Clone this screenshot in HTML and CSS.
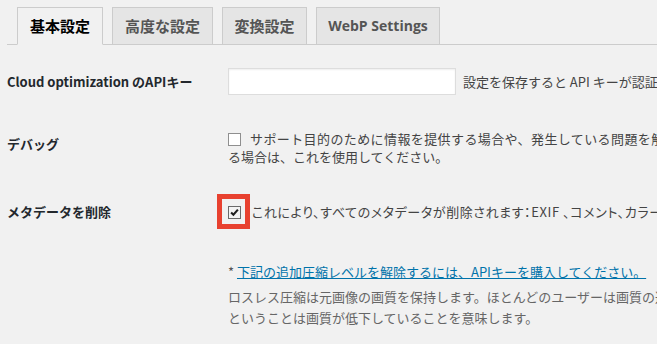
FILE: index.html
```html
<!DOCTYPE html>
<html lang="ja">
<head>
<meta charset="utf-8">
<title>設定</title>
<link rel="stylesheet" href="styles.css">
</head>
<body>
<div class="wrap">
  <nav class="tabs">
    <a class="tab active">基本設定</a>
    <a class="tab">高度な設定</a>
    <a class="tab">変換設定</a>
    <a class="tab latin">WebP Settings</a>
  </nav>

  <div class="row row-api">
    <div class="label">Cloud optimization のAPIキー</div>
    <div class="field">
      <input class="text-input" type="text">
      <span class="hint">設定を保存すると API キーが認証されます。</span>
    </div>
  </div>

  <div class="row row-debug">
    <div class="label label-offset">デバッグ</div>
    <div class="field lines">
      <span class="cb"></span><span class="cb-text spaced">サポート目的のために情報を提供する場合や、発生している問題を解決する必要があ</span><br>る場合は、これを使用してください。
    </div>
  </div>

  <div class="row row-meta">
    <div class="label">メタデータを削除</div>
    <div class="field lines">
      <span class="cb checked hl"><svg viewBox="0 0 13 13" width="11" height="11"><path d="M2.5 6.5 L5.2 9.2 L10.5 3" fill="none" stroke="#1e1e1e" stroke-width="2.4"/></svg></span><span class="cb-text tight">これにより、すべてのメタデータが削除されます：EXIF 、コメント、カラープロファイル、その他EXIF以外のすべて。</span>
    </div>
  </div>

  <div class="row row-level">
    <div class="label"></div>
    <div class="field">
      <div class="note">* <a class="link" href="#">下記の追加圧縮レベルを解除するには、APIキーを購入してください。</a></div>
      <p class="desc">ロスレス圧縮は元画像の画質を保持します。ほとんどのユーザーは画質の違いに気付きませんが、非可逆圧縮<br>ということは画質が低下していることを意味します。</p>
    </div>
  </div>
</div>
</body>
</html>
```

FILE: styles.css
```css
html, body {
  margin: 0;
  padding: 0;
  background: #f1f1f1;
  overflow: hidden;
}
body {
  font-family: "Noto Sans CJK JP", "Noto Sans", sans-serif;
  font-size: 13px;
  color: #444;
  width: 657px;
  height: 344px;
}
.wrap {
  padding-left: 7px;
  white-space: nowrap;
}
.tabs {
  display: flex;
  margin-top: 7px;
  padding-left: 10px;
  border-bottom: 1px solid #ccc;
  height: 37px;
}
.tab {
  display: block;
  box-sizing: border-box;
  height: 38px;
  padding: 6px 10px;
  line-height: 24px;
  font-size: 15px;
  font-weight: 700;
  color: #555;
  background: #e5e5e5;
  border: 1px solid #ccc;
  margin-right: 9px;
  text-decoration: none;
}
.tab:nth-child(1) { width: 86px; text-align: center; }
.tab:nth-child(2) { width: 101px; text-align: center; }
.tab:nth-child(3) { width: 85px; text-align: center; }
.tab.latin { width: 124px; text-align: center; font-size: 14px; font-family: "Open Sans", "Noto Sans", sans-serif; }
.tab.active {
  background: #f1f1f1;
  border-bottom-color: #f1f1f1;
  color: #000;
}
.row {
  display: grid;
  grid-template-columns: 221px auto;
}
.label {
  font-weight: 700;
  color: #23282d;
  font-size: 13px;
  line-height: 18px;
}
.row-api {
  margin-top: 23px;
  align-items: center;
}
.text-input {
  box-sizing: border-box;
  width: 228px;
  height: 27px;
  margin: 0;
  padding: 0 6px;
  border: 1px solid #ddd;
  background: #fff;
  box-shadow: inset 0 1px 2px rgba(0,0,0,.07);
  vertical-align: middle;
  outline: none;
}
.hint {
  margin-left: 4px;
  vertical-align: middle;
}
.lines {
  line-height: 18px;
}
.spaced {
  letter-spacing: 0.4px;
}
.tight {
  font-feature-settings: "palt";
  letter-spacing: 0.6px;
}
.row-debug {
  margin-top: 35px;
}
.label-offset {
  padding-top: 5px;
}
.row-meta {
  margin-top: 37px;
}
.cb {
  position: relative;
  display: inline-block;
  box-sizing: border-box;
  width: 13px;
  height: 13px;
  border: 1px solid #8f8f8f;
  background: #fff;
  vertical-align: -2px;
  margin-right: 9px;
}
.cb.checked {
  border-color: #6a6a6a;
  background: #f3f3f3;
  margin-right: 11px;
}
.cb svg {
  display: block;
}
.hl::after {
  content: "";
  position: absolute;
  top: -13px;
  left: -12px;
  right: -10px;
  bottom: -11px;
  border: 5px solid #e8412f;
}
.row-level {
  margin-top: 40px;
}
.note {
  line-height: 21px;
  color: #555;
}
.link {
  color: #0073aa;
  text-decoration: underline;
}
.desc {
  margin: 4px 0 0;
  line-height: 21px;
  color: #666;
}
```
